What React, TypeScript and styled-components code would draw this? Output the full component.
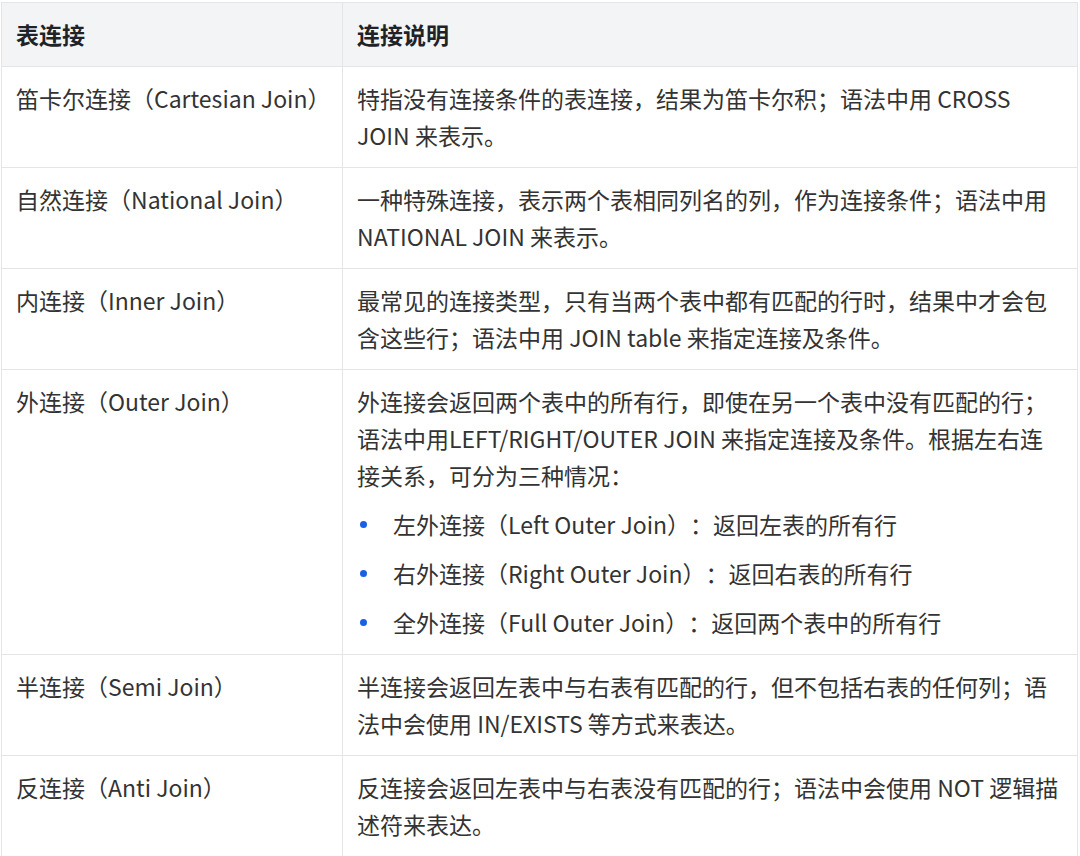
import React from 'react';
import styled, { createGlobalStyle } from 'styled-components';

const GlobalStyle = createGlobalStyle`
  html, body {
    margin: 0;
    padding: 0;
    background: #fff;
  }
  body {
    font-family: "Noto Sans CJK SC", "Noto Sans", sans-serif;
    text-spacing-trim: space-all;
  }
`

const Wrapper = styled.div`
  padding: 2px 2px 0 1px;
  width: 1080px;
  box-sizing: border-box;
`

const Table = styled.table`
  width: 100%;
  border-collapse: collapse;
  table-layout: fixed;
  color: #333;
  font-size: 23px;
  line-height: 37px;
`

const HeadCell = styled.th<{ $w?: number }>`
  background: #f3f4f6;
  border: 1px solid #e3e5e8;
  padding: 13px 14px;
  text-align: left;
  font-weight: 700;
  color: #1f2328;
  width: ${(p) => (p.$w ? p.$w + 'px' : 'auto')};
`

const Cell = styled.td<{ $nowrap?: boolean }>`
  border: 1px solid #e3e5e8;
  padding: 13px 14px;
  vertical-align: top;
  white-space: ${(p) => (p.$nowrap ? 'nowrap' : 'normal')};
`

const Para = styled.p`
  margin: 0;
`

const List = styled.ul`
  list-style: none;
  margin: 0;
  padding: 0 0 0 36px;
`

const Item = styled.li`
  position: relative;
  margin-top: 12px;

  &::before {
    content: '';
    position: absolute;
    left: -33px;
    top: 15px;
    width: 7px;
    height: 7px;
    border-radius: 50%;
    background: #1a5fe4;
  }
`

type Row = {
  name: string;
  desc: string;
  items?: string[];
}

const rows: Row[] = [
  {
    name: '笛卡尔连接（Cartesian Join）',
    desc: '特指没有连接条件的表连接，结果为笛卡尔积；语法中用 CROSS JOIN 来表示。',
  },
  {
    name: '自然连接（National Join）',
    desc: '一种特殊连接，表示两个表相同列名的列，作为连接条件；语法中用 NATIONAL JOIN 来表示。',
  },
  {
    name: '内连接（Inner Join）',
    desc: '最常见的连接类型，只有当两个表中都有匹配的行时，结果中才会包含这些行；语法中用 JOIN table 来指定连接及条件。',
  },
  {
    name: '外连接（Outer Join）',
    desc: '外连接会返回两个表中的所有行，即使在另一个表中没有匹配的行；语法中用LEFT/RIGHT/OUTER JOIN 来指定连接及条件。根据左右连接关系，可分为三种情况：',
    items: [
      '左外连接（Left Outer Join）：返回左表的所有行',
      '右外连接（Right Outer Join）：返回右表的所有行',
      '全外连接（Full Outer Join）：返回两个表中的所有行',
    ],
  },
  {
    name: '半连接（Semi Join）',
    desc: '半连接会返回左表中与右表有匹配的行，但不包括右表的任何列；语法中会使用 IN/EXISTS 等方式来表达。',
  },
  {
    name: '反连接（Anti Join）',
    desc: '反连接会返回左表中与右表没有匹配的行；语法中会使用 NOT 逻辑描述符来表达。',
  },
]

const App: React.FC = () => {
  return (
    <Wrapper>
      <GlobalStyle />
      <Table>
        <thead>
          <tr>
            <HeadCell $w={312}>表连接</HeadCell>
            <HeadCell>连接说明</HeadCell>
          </tr>
        </thead>
        <tbody>
          {rows.map((r) => (
            <tr key={r.name}>
              <Cell $nowrap>{r.name}</Cell>
              <Cell>
                <Para>{r.desc}</Para>
                {r.items && (
                  <List>
                    {r.items.map((it) => (
                      <Item key={it}>{it}</Item>
                    ))}
                  </List>
                )}
              </Cell>
            </tr>
          ))}
        </tbody>
      </Table>
    </Wrapper>
  );
}

export default App;
